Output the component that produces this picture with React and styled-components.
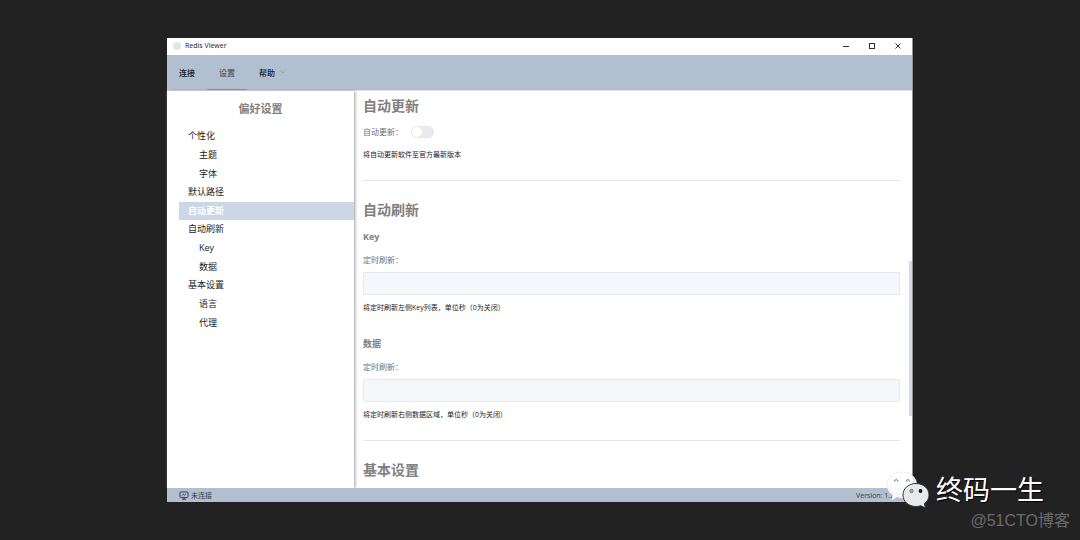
import React from 'react'
import styled, { createGlobalStyle } from 'styled-components'

const GlobalStyle = createGlobalStyle`
    * {
        box-sizing: border-box;
    }
    body {
        margin: 0;
        background-color: #222222;
        font-family: "Open Sans", "Noto Sans CJK SC", sans-serif;
    }
    h1, h2, h3, p, ul {
        margin: 0;
        padding: 0;
    }
`

const Desktop = styled.div`
    position: relative;
    height: 100vh;
    padding: 38px 167px;
    display: flex;
    overflow: hidden;
`
const Window = styled.div`
    flex: 1;
    min-width: 0;
    display: flex;
    flex-direction: column;
    background-color: #ffffff;
    border-right: 1px solid #8f8f8f;
`
const TitleBar = styled.header`
    height: 17px;
    display: flex;
    align-items: center;
    justify-content: space-between;
    padding: 0 7px 2px 6px;
`
const AppName = styled.div`
    display: flex;
    align-items: center;
    gap: 4px;
    font-size: 7px;
    line-height: 12px;
    color: #222222;
`
const AppLogo = styled.span`
    width: 8px;
    height: 8px;
    border-radius: 50%;
    background-color: #dfe6e4;
`
const WindowButtons = styled.div`
    display: flex;
    gap: 12px;
`
const WindowButton = styled.button`
    width: 14px;
    height: 14px;
    padding: 0;
    border: none;
    background: none;
    display: flex;
    align-items: center;
    justify-content: center;
    color: #333333;
`
const Menu = styled.nav`
    height: 36px;
    display: flex;
    background-color: #b2bfd1;
    border-bottom: 1px solid #dde1e8;
`
const MenuItem = styled.a`
    display: flex;
    align-items: center;
    gap: 5px;
    padding: 0 12px;
    font-size: 8px;
    font-weight: 500;
    text-decoration: none;
    color: ${(props) => (props.$active ? '#4c525b' : '#15181d')};
    border-bottom: 1px solid ${(props) => (props.$active ? '#409eff' : 'transparent')};
`
const Body = styled.div`
    flex: 1;
    min-height: 0;
    display: flex;
`
const Sidebar = styled.aside`
    width: 187px;
    flex-shrink: 0;
    box-shadow: 1px 0 3px #9a9a9a;
`
const SidebarTitle = styled.h1`
    padding: 10px 0;
    text-align: center;
    font-size: 11px;
    line-height: 16px;
    color: #808080;
`
const Tree = styled.ul`
    height: 205px;
    margin-left: 12px;
    display: grid;
    grid-auto-rows: 1fr;
    list-style: none;
`
const TreeLink = styled.a`
    height: 100%;
    display: flex;
    align-items: center;
    padding-left: ${(props) => (props.$nested ? '20px' : '9px')};
    font-size: 9px;
    line-height: 12px;
    text-decoration: none;
    color: ${(props) => (props.$active ? '#ffffff' : '#222222')};
    font-weight: ${(props) => (props.$active ? 'bold' : 'normal')};
    background-color: ${(props) => (props.$active ? '#cbd7e4' : 'transparent')};
`
const Content = styled.main`
    flex: 1;
    min-width: 0;
    padding: 5px 9px 0;
    overflow: hidden;
`
const ScrollTrack = styled.div`
    width: 3px;
    padding-top: 170px;
`
const ScrollThumb = styled.div`
    height: 155px;
    background-color: #d0dbe7;
`
const SectionTitle = styled.h2`
    font-size: 14px;
    line-height: 20px;
    color: #808080;
`
const Group = styled.div`
    margin-top: ${(props) => (props.$spaced ? '23px' : '10px')};
`
const GroupTitle = styled.h3`
    margin-bottom: 10px;
    font-size: 9px;
    line-height: 14px;
    color: #808080;
`
const SwitchRow = styled.div`
    margin: 8px 0 9px;
    height: 16px;
    display: flex;
    align-items: center;
    gap: 8px;
`
const Label = styled.label`
    display: block;
    font-size: 8px;
    line-height: 12px;
    color: #707276;
`
const Switch = styled.input`
    appearance: none;
    width: 23px;
    height: 12px;
    margin: 0;
    border-radius: 6px;
    background-color: #e9eaef;
    border: 1px solid #e6e7ec;

    &::before {
        content: '';
        display: block;
        width: 10px;
        height: 10px;
        border-radius: 50%;
        background-color: #ffffff;
    }
    &:checked {
        background-color: #409eff;
    }
    &:checked::before {
        margin-left: auto;
    }
`
const Input = styled.input`
    display: block;
    width: 100%;
    height: 23px;
    margin: 6px 0 7px;
    padding: 0 8px;
    font-size: 8px;
    background-color: #f5f7fb;
    border: 1px solid #e6eaf0;
    border-radius: 2px;
`
const Hint = styled.p`
    font-size: 7px;
    line-height: 12px;
    color: #222222;
`
const Divider = styled.hr`
    height: 1px;
    margin: 19px 0;
    border: none;
    background-color: #e4e6ea;
`
const StatusBar = styled.footer`
    height: 14px;
    display: flex;
    align-items: center;
    justify-content: space-between;
    padding: 1px 12px 0;
    font-size: 7px;
    line-height: 12px;
    color: #363b43;
    background-color: #b2bfd1;
`
const Status = styled.span`
    display: flex;
    align-items: center;
    gap: 2px;
`
const Brand = styled.div`
    position: absolute;
    right: 36px;
    bottom: 31px;
    display: flex;
    align-items: center;
    gap: 6px;
    font-size: 27px;
    line-height: 38px;
    color: #ffffff;
    text-shadow: 1px 1px 1px #000000;
`
const Credit = styled.div`
    position: absolute;
    right: 10px;
    bottom: 7px;
    font-family: "Liberation Sans", "Noto Sans CJK SC", sans-serif;
    font-size: 16px;
    line-height: 24px;
    color: #6b6b6b;
`

const treeItems = [
  { label: '个性化' },
  { label: '主题', nested: true },
  { label: '字体', nested: true },
  { label: '默认路径' },
  { label: '自动更新', active: true },
  { label: '自动刷新' },
  { label: 'Key', nested: true },
  { label: '数据', nested: true },
  { label: '基本设置' },
  { label: '语言', nested: true },
  { label: '代理', nested: true },
]

const WechatIcon = () => (
  <svg width="44" height="38" viewBox="0 0 44 38">
    <path
      d="M16 1C7.500 1 1 6.500 1 14c0 4.500 2.200 8 5.500 10.300L5.500 29.500l5.500-3C12.500 26.900 14 27 16 27c8.500 0 15-5.500 15-13S24.500 1 16 1z"
      fill="#ffffff" fillOpacity="0.9" stroke="#cfcfcf" strokeWidth="0.6" strokeDasharray="2 1.5"
    />
    <path d="M8.500 10.500c.5-2.500 3-2.500 3.500 0M20 10.500c.5-2.500 3-2.500 3.500 0" fill="none" stroke="#555555" strokeWidth="1" />
    <path
      d="M30 12.500c-7.500 0-13 5-13 11.500s5.500 11.500 13 11.500c1.800 0 3.400-.2 4.800-.8l4.700 2.300-1.200-4.200c3-2.200 4.700-5.200 4.700-8.800 0-6.500-5.500-11.500-13-11.500z"
      fill="#e8e9ea" stroke="#333333" strokeWidth="1"
    />
    <circle cx="25.500" cy="20" r="1.700" fill="#a9b5c5" stroke="#444444" strokeWidth="0.600" />
    <circle cx="34.500" cy="20" r="1.900" fill="#111111" />
  </svg>
)

const App = () => {
  return (
    <>
      <GlobalStyle />
      <Desktop>
        <Window>
          <TitleBar>
            <AppName><AppLogo />Redis Viewer</AppName>
            <WindowButtons>
              <WindowButton aria-label="最小化">
                <svg width="8" height="8" viewBox="0 0 8 8" stroke="currentColor"><path d="M1 4.500h6" /></svg>
              </WindowButton>
              <WindowButton aria-label="最大化">
                <svg width="8" height="8" viewBox="0 0 8 8" stroke="currentColor" fill="none"><rect x="1.500" y="1.500" width="5" height="5" /></svg>
              </WindowButton>
              <WindowButton aria-label="关闭">
                <svg width="8" height="8" viewBox="0 0 8 8" stroke="currentColor"><path d="M1.500 1.500l5 5M6.500 1.500l-5 5" /></svg>
              </WindowButton>
            </WindowButtons>
          </TitleBar>
          <Menu>
            <MenuItem href="#connect">连接</MenuItem>
            <MenuItem href="#settings" $active>设置</MenuItem>
            <MenuItem href="#help">
              帮助
              <svg width="6" height="6" viewBox="0 0 6 6" fill="none" stroke="#8b949f" strokeWidth="0.700"><path d="M.5 1.500L3 4l2.500-2.500" /></svg>
            </MenuItem>
          </Menu>
          <Body>
            <Sidebar>
              <SidebarTitle>偏好设置</SidebarTitle>
              <Tree>
                {treeItems.map((item) => (
                  <li key={item.label}>
                    <TreeLink href={`#${item.label}`} $nested={item.nested} $active={item.active}>{item.label}</TreeLink>
                  </li>
                ))}
              </Tree>
            </Sidebar>
            <Content>
              <SectionTitle>自动更新</SectionTitle>
              <SwitchRow>
                <Label htmlFor="auto-update">自动更新：</Label>
                <Switch id="auto-update" type="checkbox" />
              </SwitchRow>
              <Hint>将自动更新软件至官方最新版本</Hint>
              <Divider />
              <SectionTitle>自动刷新</SectionTitle>
              <Group>
                <GroupTitle>Key</GroupTitle>
                <Label htmlFor="key-refresh">定时刷新：</Label>
                <Input id="key-refresh" type="text" />
                <Hint>将定时刷新左侧Key列表，单位秒（0为关闭）</Hint>
              </Group>
              <Group $spaced>
                <GroupTitle>数据</GroupTitle>
                <Label htmlFor="data-refresh">定时刷新：</Label>
                <Input id="data-refresh" type="text" />
                <Hint>将定时刷新右侧数据区域，单位秒（0为关闭）</Hint>
              </Group>
              <Divider />
              <SectionTitle>基本设置</SectionTitle>
            </Content>
            <ScrollTrack><ScrollThumb /></ScrollTrack>
          </Body>
          <StatusBar>
            <Status>
              <svg width="10" height="9" viewBox="0 0 10 9" fill="none" stroke="#30353d" strokeWidth="0.900">
                <rect x="1" y="1" width="8" height="5.500" rx="0.800" />
                <path d="M3 4.500l1.300-1.300 1.200 1L7 2.800M3 8.300h4M5 6.500v1.800" />
              </svg>
              未连接
            </Status>
            <span>Version: 1.2.2</span>
          </StatusBar>
        </Window>
        <Brand><WechatIcon />终码一生</Brand>
        <Credit>@51CTO博客</Credit>
      </Desktop>
    </>
  )
}

export default App
